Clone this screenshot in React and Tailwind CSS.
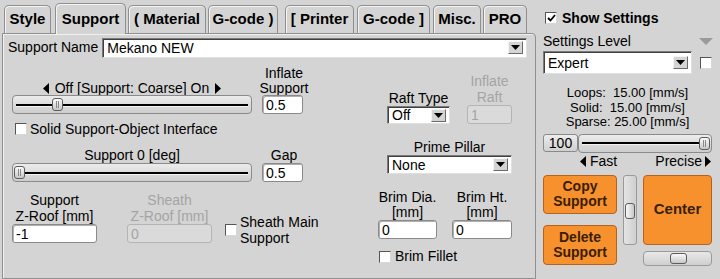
import React from "react";

const LeftTri = () => (
  <svg width="6" height="11" viewBox="0 0 6 11" className="inline-block">
    <path d="M6 0 L0 5.5 L6 11 Z" fill="#000" />
  </svg>
);
const RightTri = () => (
  <svg width="6" height="11" viewBox="0 0 6 11" className="inline-block">
    <path d="M0 0 L6 5.5 L0 11 Z" fill="#000" />
  </svg>
);

const Tab = ({ label, w, ml, active }) => (
  <div
    className={
      "flex items-center justify-center rounded-t-[5px] border border-b-0 border-[#8f8f8f] font-bold text-[15px] shadow-[inset_1px_1px_0_#f4f4f4] " +
      (active ? "h-[31px] bg-[#d4d4d4] relative z-10 -mb-px" : "h-[28px] bg-[#d4d4d4]")
    }
    style={{ width: w, marginLeft: ml }}
  >
    {label}
  </div>
);

const Select = ({ value, w, h = 19 }) => (
  <div
    className="flex items-center bg-white border border-[#7a7a7a] border-r-[#e0e0e0] border-b-[#e0e0e0] shadow-[inset_1px_1px_0_#404040]"
    style={{ width: w, height: h }}
  >
    <span className="flex-1 pl-[4px] leading-none">{value}</span>
    <div className="mr-[3px] w-[15px] h-[13px] flex items-center justify-center bg-[#d4d4d4] border border-[#f4f4f4] border-r-[#6a6a6a] border-b-[#6a6a6a]">
      <svg width="9" height="5" viewBox="0 0 9 5">
        <path d="M0 0 L9 0 L4.5 5 Z" fill="#000" />
      </svg>
    </div>
  </div>
);

const Input = ({ value, w, h = 19, disabled }) => (
  <div
    className={
      "flex items-center pl-[3px] rounded-[3px] border leading-none " +
      (disabled
        ? "bg-[#dadada] border-[#b4b4b4] text-[#a4a4a4]"
        : "bg-white border-[#8a8a8a] shadow-[inset_1px_1px_0_#b0b0b0]")
    }
    style={{ width: w, height: h }}
  >
    {value}
  </div>
);

const Slider = ({ w, h = 19, thumb }) => (
  <div
    className="relative rounded-[4px] border border-[#8a8a8a] bg-gradient-to-b from-[#ececec] to-[#cdcdcd]"
    style={{ width: w, height: h }}
  >
    <div className="absolute left-[3px] right-[3px] top-1/2 -mt-[1px] h-[2px] bg-black" />
    <div className="absolute left-[3px] right-[3px] top-1/2 mt-[1px] h-[1px] bg-[#f2f2f2]" />
    <div
      className="absolute top-[2px] bottom-[2px] w-[11px] rounded-[3px] border border-[#5c5c5c] bg-gradient-to-b from-[#fafafa] to-[#c8c8c8] flex justify-center"
      style={{ left: thumb }}
    >
      <div className="w-[3px] my-[2px] border-x border-[#8a8a8a]" />
    </div>
  </div>
);

const Check = ({ checked }) => (
  <div className="w-[12px] h-[12px] bg-white border border-[#555] border-r-[#d8d8d8] border-b-[#d8d8d8] flex items-center justify-center shrink-0">
    {checked && (
      <svg width="9" height="8" viewBox="0 0 9 8">
        <path d="M1 4 L3.5 6.5 L8 1" stroke="#000" strokeWidth="1.8" fill="none" />
      </svg>
    )}
  </div>
);

const OrangeBtn = ({ children, h }) => (
  <div
    className="w-[74px] flex flex-col items-center justify-center rounded-[4px] border border-[#b5621f] bg-[#f7912e] text-[#3a1d00] font-bold text-[14px] leading-[15px] text-center"
    style={{ height: h }}
  >
    {children}
  </div>
);

export default function App() {
  return (
    <div className="w-[720px] h-[279px] overflow-hidden bg-[#d4d4d4] flex font-['Liberation_Sans',Arial,sans-serif] text-[14px] text-black">
      {/* left: tabs + body */}
      <div className="w-[536px] flex flex-col">
        <div className="h-[33px] flex items-end">
          <Tab label="Style" w={47} ml={4} />
          <Tab label="Support" w={71} ml={4} active />
          <Tab label="( Material" w={78} ml={2} />
          <Tab label="G-code )" w={70} ml={2} />
          <Tab label="[ Printer" w={69} ml={7} />
          <Tab label="G-code ]" w={73} ml={3} />
          <Tab label="Misc." w={48} ml={3} />
          <Tab label="PRO" w={44} ml={2} />
        </div>
        <div className="ml-[2px] flex-1 border border-[#8f8f8f] rounded-tr-[4px] shadow-[inset_1px_1px_0_#f0f0f0] flex flex-col">
          {/* support name */}
          <div className="flex items-center mt-[3px] pl-[5px]">
            <span className="mr-[4px]">Support Name</span>
            <Select value="Mekano NEW" w={425} h={20} />
          </div>

          <div className="flex">
            {/* left part */}
            <div className="flex flex-col ml-[9px] w-[300px] shrink-0">
              <div className="flex items-end mt-[8px]">
                <div className="flex flex-col items-center w-[240px]">
                  <div className="flex items-center gap-[6px] leading-[15px] -mb-[1px]">
                    <LeftTri />
                    <span>Off [Support: Coarse] On</span>
                    <RightTri />
                  </div>
                  <Slider w={240} thumb={39} />
                </div>
                <div className="flex flex-col items-center ml-[5px] w-[54px]">
                  <div className="leading-[15px] text-center">Inflate<br />Support</div>
                  <div className="self-start ml-[5px] mt-[-1px]">
                    <Input value="0.5" w={41} h={19} />
                  </div>
                </div>
              </div>

              <div className="flex items-center mt-[8px] ml-[3px] h-[14px]">
                <Check />
                <span className="ml-[3px]">Solid Support-Object Interface</span>
              </div>

              <div className="flex items-end mt-[12px]">
                <div className="flex flex-col items-center w-[240px]">
                  <div className="leading-[15px]">Support 0 [deg]</div>
                  <Slider w={240} thumb={1} />
                </div>
                <div className="flex flex-col items-center ml-[5px] w-[54px]">
                  <div className="leading-[15px]">Gap</div>
                  <div className="self-start ml-[5px]">
                    <Input value="0.5" w={41} h={19} />
                  </div>
                </div>
              </div>

              <div className="flex items-start mt-[10px]">
                <div className="flex flex-col items-center w-[85px]">
                  <div className="leading-[16px] text-center">Support<br />Z-Roof [mm]</div>
                  <Input value="-1" w={85} h={19} />
                </div>
                <div className="flex flex-col items-center w-[85px] ml-[30px] text-[#a4a4a4]">
                  <div className="leading-[16px] text-center">Sheath<br />Z-Roof [mm]</div>
                  <Input value="0" w={85} h={19} disabled />
                </div>
                <div className="flex items-center ml-[13px] mt-[22px] whitespace-nowrap">
                  <Check />
                  <div className="ml-[3px] leading-[16px]">Sheath Main<br />Support</div>
                </div>
              </div>
            </div>

            {/* right part */}
            <div className="flex flex-col ml-[66px] w-[135px]">
              <div className="flex items-end mt-[15px] ml-[9px]">
                <div className="flex flex-col items-center w-[63px]">
                  <div className="leading-[16px]">Raft Type</div>
                  <Select value="Off" w={63} h={18} />
                </div>
                <div className="flex flex-col items-center ml-[17px] w-[45px] text-[#a4a4a4]">
                  <div className="leading-[16px] text-center">Inflate<br />Raft</div>
                  <Input value="1" w={45} h={19} disabled />
                </div>
              </div>

              <div className="flex flex-col items-center mt-[15px] ml-[9px] w-[125px]">
                <div className="leading-[16px]">Prime Pillar</div>
                <Select value="None" w={125} h={19} />
              </div>

              <div className="flex items-end mt-[16px]">
                <div className="flex flex-col items-center w-[59px]">
                  <div className="leading-[15px] text-center">Brim Dia.<br />[mm]</div>
                  <Input value="0" w={59} h={19} />
                </div>
                <div className="flex flex-col items-center ml-[15px] w-[60px]">
                  <div className="leading-[15px] text-center">Brim Ht.<br />[mm]</div>
                  <Input value="0" w={60} h={19} />
                </div>
              </div>

              <div className="flex items-center mt-[11px] ml-[1px] h-[13px] whitespace-nowrap">
                <Check />
                <span className="ml-[4px]">Brim Fillet</span>
              </div>
            </div>
          </div>
        </div>
      </div>

      {/* right settings panel */}
      <div className="flex-1 flex flex-col pl-[7px] pr-[8px]">
        <div className="flex items-center mt-[12px] ml-[2px] h-[12px]">
          <Check checked />
          <span className="ml-[5px] font-bold">Show Settings</span>
        </div>
        <div className="flex items-center justify-between mt-[10px] h-[15px]">
          <span>Settings Level</span>
          <svg width="14" height="7" viewBox="0 0 14 7" className="mr-[-1px]">
            <path d="M0 0 L14 0 L7 7 Z" fill="#9a9a9a" />
          </svg>
        </div>
        <div className="flex items-center mt-[2px]">
          <Select value="Expert" w={149} h={23} />
          <div className="ml-[8px]">
            <Check />
          </div>
        </div>
        <div className="mt-[12px] text-[13px] leading-[14.5px] text-center w-[169px]">
          <div>Loops: &nbsp;15.00 [mm/s]</div>
          <div>Solid: &nbsp;15.00 [mm/s]</div>
          <div>Sparse: 25.00 [mm/s]</div>
        </div>
        <div className="flex items-center mt-[4px]">
          <div className="w-[35px] h-[18px] flex items-center justify-center rounded-[3px] border border-[#8a8a8a] bg-gradient-to-b from-[#ececec] to-[#d0d0d0]">
            100
          </div>
          <Slider w={134} h={19} thumb={120} />
        </div>
        <div className="flex items-center justify-between mt-[1px] ml-[37px] w-[131px] h-[15px]">
          <div className="flex items-center gap-[4px]">
            <LeftTri />
            <span>Fast</span>
          </div>
          <div className="flex items-center gap-[3px]">
            <span>Precise</span>
            <RightTri />
          </div>
        </div>
        <div className="flex mt-[6px]">
          <div className="flex flex-col">
            <OrangeBtn h={39}>
              <span>Copy</span>
              <span>Support</span>
            </OrangeBtn>
            <div className="mt-[11px]">
              <OrangeBtn h={40}>
                <span>Delete</span>
                <span>Support</span>
              </OrangeBtn>
            </div>
          </div>
          <div className="ml-[6px] w-[14px] h-[70px] rounded-[3px] border border-[#9a9a9a] bg-gradient-to-r from-[#e4e4e4] to-[#cfcfcf] flex flex-col items-center">
            <div className="mt-[27px] w-[10px] h-[16px] rounded-[3px] border border-[#5c5c5c] bg-gradient-to-r from-[#fafafa] to-[#c8c8c8]" />
          </div>
          <div className="flex flex-col ml-[6px]">
            <div className="w-[69px] h-[70px] flex items-center justify-center rounded-[4px] border border-[#b5621f] bg-[#f7912e] text-[#3a1d00] font-bold text-[15px]">
              Center
            </div>
            <div className="mt-[6px] w-[69px] h-[15px] rounded-[4px] border border-[#9a9a9a] bg-gradient-to-b from-[#e8e8e8] to-[#cfcfcf] flex items-center">
              <div className="ml-[26px] w-[17px] h-[11px] rounded-[3px] border border-[#5c5c5c] bg-gradient-to-b from-[#fafafa] to-[#c8c8c8]" />
            </div>
          </div>
        </div>
      </div>
    </div>
  );
}
